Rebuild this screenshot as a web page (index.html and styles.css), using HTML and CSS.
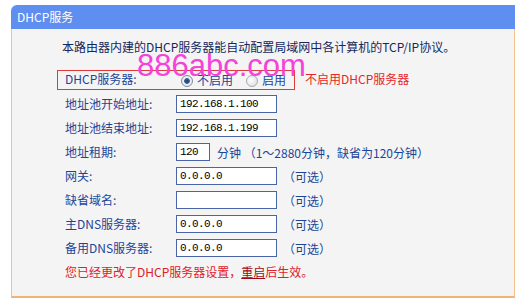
FILE: index.html
```html
<!DOCTYPE html>
<html lang="zh-CN">
<head>
    <meta charset="UTF-8">
    <title>DHCP服务</title>
    <link rel="stylesheet" href="styles.css">
</head>
<body>
    <div class="panel">
        <div class="panel-head">DHCP服务</div>
        <div class="panel-body">
            <p class="intro">本路由器内建的DHCP服务器能自动配置局域网中各计算机的TCP/IP协议。</p>

            <div class="switch-row">
                <div class="switch-box">
                    <span class="label">DHCP服务器:</span>
                    <label class="radio"><input type="radio" name="dhcp" checked>不启用</label>
                    <label class="radio second"><input type="radio" name="dhcp">启用</label>
                </div>
                <span class="hint">不启用DHCP服务器</span>
            </div>

            <div class="row">
                <span class="label">地址池开始地址:</span>
                <input class="field" type="text" value="192.168.1.100">
            </div>
            <div class="row">
                <span class="label">地址池结束地址:</span>
                <input class="field" type="text" value="192.168.1.199">
            </div>
            <div class="row">
                <span class="label">地址租期:</span>
                <input class="field short" type="text" value="120">
                <span class="note">分钟 （1～2880分钟，缺省为120分钟）</span>
            </div>
            <div class="row">
                <span class="label">网关:</span>
                <input class="field" type="text" value="0.0.0.0">
                <span class="note optional">（可选）</span>
            </div>
            <div class="row">
                <span class="label">缺省域名:</span>
                <input class="field" type="text" value="">
                <span class="note optional">（可选）</span>
            </div>
            <div class="row">
                <span class="label">主DNS服务器:</span>
                <input class="field" type="text" value="0.0.0.0">
                <span class="note optional">（可选）</span>
            </div>
            <div class="row">
                <span class="label">备用DNS服务器:</span>
                <input class="field" type="text" value="0.0.0.0">
                <span class="note optional">（可选）</span>
            </div>

            <p class="notice">您已经更改了DHCP服务器设置，<a href="#">重启</a>后生效。</p>
        </div>
        <div class="watermark">886abc.com</div>
    </div>
</body>
</html>
```

FILE: styles.css
```css
* {
    margin: 0;
    padding: 0;
    box-sizing: border-box;
}

body {
    background: #fff;
    font-family: "Noto Sans CJK SC", "Liberation Sans", sans-serif;
    font-size: 12px;
}

.panel {
    position: relative;
    width: 504px;
    margin: 5px 0 0 11px;
}

.panel-head {
    height: 24px;
    line-height: 24px;
    padding-left: 6px;
    background: #5e8eef;
    color: #fff;
    border-top-left-radius: 6px;
}

.panel-body {
    background: #f4f4f4;
    border-left: 1px solid #f3c28e;
    border-right: 1px solid #f3c28e;
    border-bottom: 2px solid #f0b47a;
    padding: 10px 0 12px 0;
}

.intro {
    line-height: 16px;
    padding-left: 50px;
    color: #13285e;
}

.switch-row {
    display: flex;
    align-items: center;
    margin: 15px 0 2px 45px;
}

.switch-box {
    display: flex;
    align-items: center;
    width: 238px;
    height: 20px;
    border: 1px solid #e03a3a;
    padding-left: 7px;
}

.label {
    width: 111px;
    flex-shrink: 0;
    color: #1d4597;
    line-height: 18px;
}

.switch-box .label {
    margin-top: -2px;
}

.radio {
    display: flex;
    align-items: center;
    color: #1d4597;
    line-height: 18px;
}

.radio.second {
    margin-left: 8px;
}

.radio input {
    appearance: none;
    width: 12px;
    height: 12px;
    margin: 2px 4px 0 5px;
    border: 1px solid #a4adb8;
    border-radius: 50%;
    background: radial-gradient(circle at 40% 40%, #fff 0, #e4e4e4 70%, #d0d0d0 100%);
}

.radio input:checked {
    border-color: #7f8c9c;
    background: radial-gradient(circle, #1f3d6e 0, #3a5f9a 2.5px, #eef1f5 3.2px, #dde2e8 100%);
}

.hint {
    margin-left: 10px;
    color: #e8262a;
    line-height: 16px;
    margin-top: -3px;
}

.row {
    display: flex;
    align-items: center;
    height: 24px;
    padding-left: 53px;
}

.field {
    width: 101px;
    height: 18px;
    border: 1px solid #4a64a8;
    background: #fff;
    padding: 0 3px;
    font-family: "Liberation Mono", monospace;
    font-size: 11px;
    letter-spacing: -0.6px;
    color: #000;
    outline: none;
}

.field.short {
    width: 34px;
}

.note {
    margin-left: 7px;
    color: #1d4597;
}

.note.optional {
    margin-left: 6px;
}

.notice {
    height: 24px;
    line-height: 24px;
    padding-left: 53px;
    color: #e0202a;
}

.notice a {
    color: #9b0a18;
    text-decoration: underline;
}

.watermark {
    position: absolute;
    left: 126px;
    top: 46px;
    font-family: "Liberation Sans", sans-serif;
    font-size: 31px;
    line-height: 30px;
    color: #f542d8;
    pointer-events: none;
}
```
